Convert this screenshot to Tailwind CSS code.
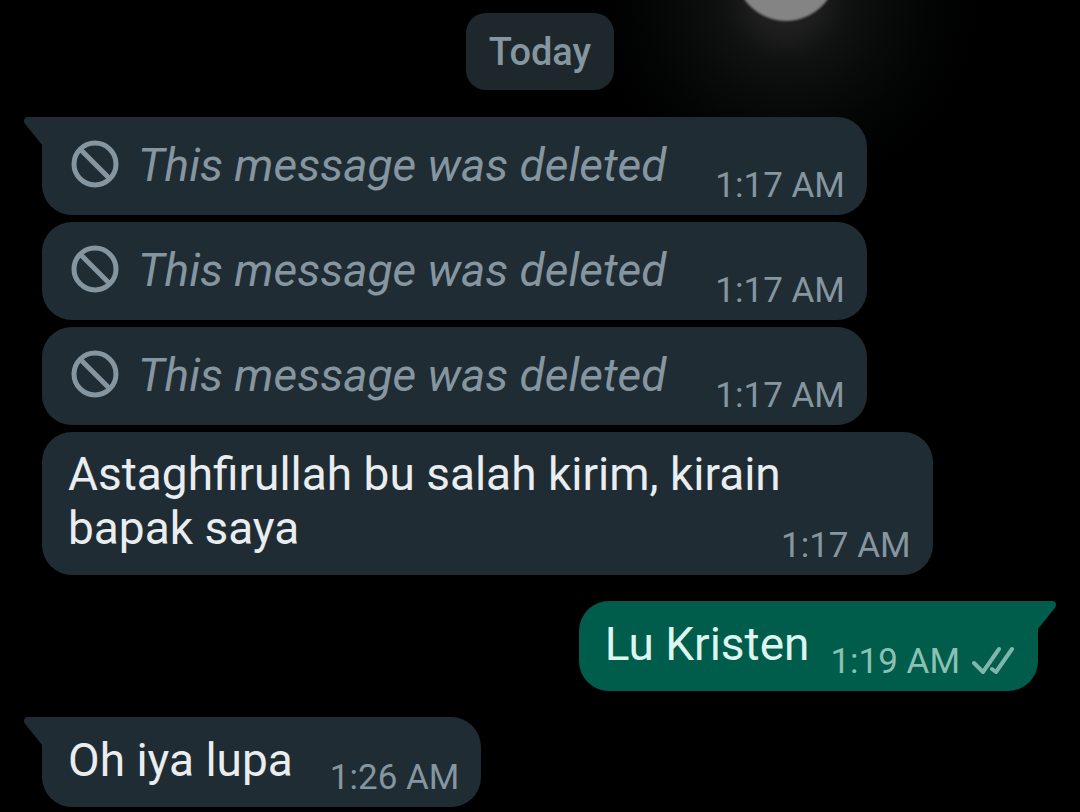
<!DOCTYPE html>
<html lang="id">
<head>
  <meta charset="UTF-8" />
  <meta name="viewport" content="width=device-width, initial-scale=1.0" />
  <title>Chat</title>
  <script src="https://cdn.jsdelivr.net/npm/@tailwindcss/browser@4"></script>
</head>
<body class="relative bg-black min-h-screen overflow-hidden font-['Roboto','Liberation_Sans',sans-serif]">
  <!-- Moon wallpaper -->
  <div class="absolute top-0 left-[786px] -translate-x-1/2 -translate-y-1/2 size-[380px] bg-[radial-gradient(closest-side,#222222_0%,#1d1d1d_18%,#101111_32%,#090a0a_52%,#030404_75%,#000000_100%)]"></div>
  <div class="absolute -top-[81px] left-[786px] -translate-x-1/2 size-[102px] rounded-full bg-[#848484] blur-[1px]"></div>

  <main class="relative flex flex-col px-[42px] pt-[13px] text-[46px] leading-[54px] text-[#e9edf0]">
    <div class="self-center rounded-[20px] bg-[#1e272c] px-[23px] pt-3 pb-[11px] mb-[27px] text-[38px] font-medium text-[#8696a0]">Today</div>

    <div id="deletedList" class="flex flex-col items-start gap-[7px] mb-[7px]">
      <div class="relative flex items-end gap-[49px] rounded-[30px] rounded-tl-none bg-[#202c33] pl-[29px] pr-[22px]">
        <svg class="absolute top-0 right-full w-5 h-8 -mr-px" viewBox="0 0 20 32" fill="#202c33"><path d="M20 0H5Q1 0 1 4Q1 6 3 8L19 28H20Z" /></svg>
        <div class="flex items-center gap-[19px] pt-[21px] pb-[23px] text-[#8696a0]">
          <svg class="size-12 overflow-visible" viewBox="0 0 48 48" fill="none" stroke="#8696a0" stroke-width="5"><circle cx="24" cy="23" r="21" /><path d="M9 8L39 38" /></svg>
          <p class="italic">This message was deleted</p>
        </div>
        <time class="pb-[9px] text-[35px] leading-10 text-[#8696a0]">1:17 AM</time>
      </div>

      <div class="flex items-end gap-[49px] rounded-[30px] bg-[#202c33] pl-[29px] pr-[22px]">
        <div class="flex items-center gap-[19px] pt-[21px] pb-[23px] text-[#8696a0]">
          <svg class="size-12 overflow-visible" viewBox="0 0 48 48" fill="none" stroke="#8696a0" stroke-width="5"><circle cx="24" cy="23" r="21" /><path d="M9 8L39 38" /></svg>
          <p class="italic">This message was deleted</p>
        </div>
        <time class="pb-[9px] text-[35px] leading-10 text-[#8696a0]">1:17 AM</time>
      </div>

      <div class="flex items-end gap-[49px] rounded-[30px] bg-[#202c33] pl-[29px] pr-[22px]">
        <div class="flex items-center gap-[19px] pt-[21px] pb-[23px] text-[#8696a0]">
          <svg class="size-12 overflow-visible" viewBox="0 0 48 48" fill="none" stroke="#8696a0" stroke-width="5"><circle cx="24" cy="23" r="21" /><path d="M9 8L39 38" /></svg>
          <p class="italic">This message was deleted</p>
        </div>
        <time class="pb-[9px] text-[35px] leading-10 text-[#8696a0]">1:17 AM</time>
      </div>
    </div>

    <div class="self-start flex items-end rounded-[30px] bg-[#202c33] pl-[26px] pr-[22px] mb-[26px]">
      <p class="max-w-[719px] pt-[15px] pb-5">Astaghfirullah bu salah kirim, kirain bapak saya</p>
      <time class="shrink-0 -ml-[6px] pb-[9px] text-[35px] leading-10 text-[#8696a0]">1:17 AM</time>
    </div>

    <div class="relative self-end flex items-end gap-[21px] rounded-[30px] rounded-tr-none bg-[#005c4b] pl-[26px] pr-[22px] mb-[26px]">
      <svg class="absolute top-0 left-full w-5 h-8 -ml-px" viewBox="0 0 20 32" fill="#005c4b"><path d="M0 0H15Q19 0 19 4Q19 6 17 8L1 28H0Z" /></svg>
      <p class="pt-4 pb-5 text-[#dcf5ef]">Lu Kristen</p>
      <div class="flex items-center gap-3 pb-[9px] text-[35px] leading-10 text-[#8cc0b5]">
        <time>1:19 AM</time>
        <svg class="w-11 h-8" viewBox="0 0 44 32" fill="none" stroke="#7fb5aa" stroke-width="4" stroke-linecap="round" stroke-linejoin="round"><path d="M2 17L11 26L27 3M20 23L24 26L40 3" /></svg>
      </div>
    </div>

    <div class="relative self-start flex items-end gap-[37px] rounded-[30px] rounded-tl-none bg-[#202c33] pl-[26px] pr-[22px]">
      <svg class="absolute top-0 right-full w-5 h-8 -mr-px" viewBox="0 0 20 32" fill="#202c33"><path d="M20 0H5Q1 0 1 4Q1 6 3 8L19 28H20Z" /></svg>
      <p class="pt-4 pb-5">Oh iya lupa</p>
      <time class="pb-[9px] text-[35px] leading-10 text-[#8696a0]">1:26 AM</time>
    </div>
  </main>
</body>
</html>
